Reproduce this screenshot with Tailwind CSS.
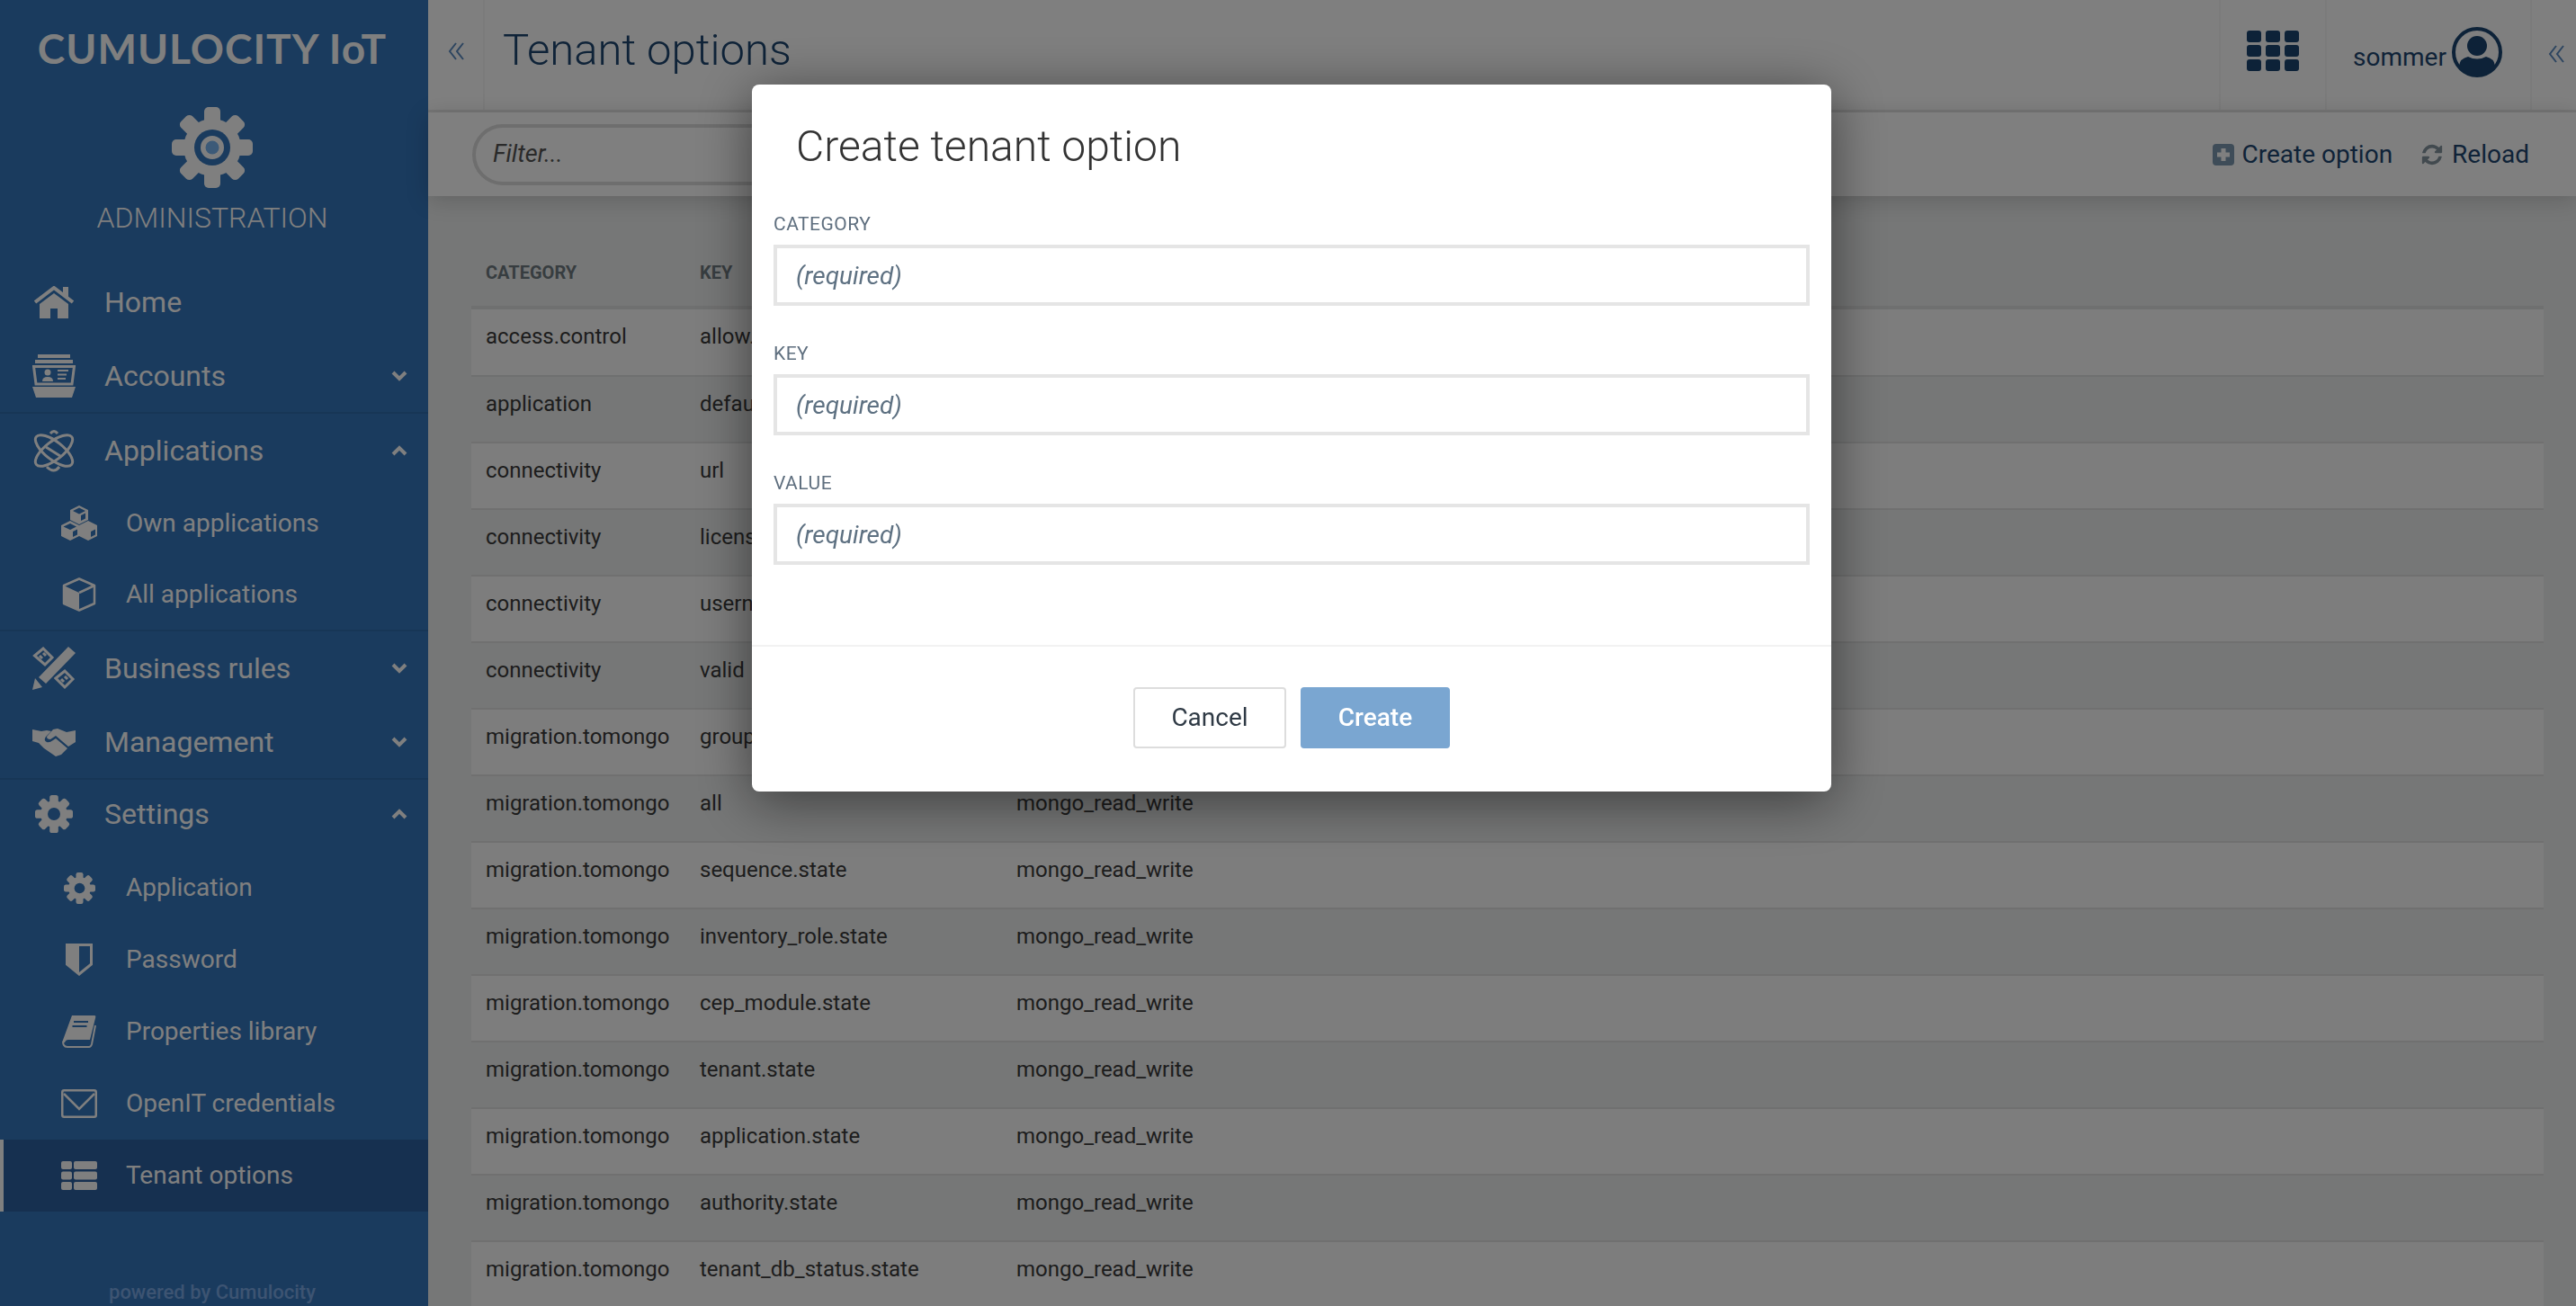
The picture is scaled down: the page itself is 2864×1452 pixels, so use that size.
<!DOCTYPE html>
<html lang="en">
<head>
  <meta charset="UTF-8">
  <title>Tenant options - Administration</title>
  <script src="https://cdn.jsdelivr.net/npm/@tailwindcss/browser@4"></script>
</head>
<body class="font-['Roboto',sans-serif] bg-[#eceeee]">
  <!-- shared gear -->
  <svg class="hidden">
    <symbol id="gear" viewBox="0 0 48 48">
      <g fill="currentColor">
        <rect x="18.5" y="0" width="11" height="48" rx="3"/>
        <rect x="18.5" y="0" width="11" height="48" rx="3" transform="rotate(45 24 24)"/>
        <rect x="18.5" y="0" width="11" height="48" rx="3" transform="rotate(90 24 24)"/>
        <rect x="18.5" y="0" width="11" height="48" rx="3" transform="rotate(135 24 24)"/>
        <circle cx="24" cy="24" r="17"/>
      </g>
      <circle cx="24" cy="24" r="8" fill="#3476bc"/>
    </symbol>
    <symbol id="chev-down" viewBox="0 0 18 12"><path d="M2 2l7 7 7-7" fill="none" stroke="currentColor" stroke-width="4"/></symbol>
    <symbol id="chev-up" viewBox="0 0 18 12"><path d="M2 10l7-7 7 7" fill="none" stroke="currentColor" stroke-width="4"/></symbol>
    <symbol id="dbl" viewBox="0 0 18 20"><path d="M9 1L2 10l7 9M17 1l-7 9 7 9" fill="none" stroke="currentColor" stroke-width="2"/></symbol>
  </svg>

  <div class="flex h-[1452px] w-[2864px] overflow-hidden">
    <!-- sidebar -->
    <aside class="w-[476px] shrink-0 h-full bg-[#3476bc] text-white flex flex-col">
      <div class="h-[295px] shrink-0 flex flex-col items-center pr-[4px]">
        <div class="mt-[26px] h-[56px] leading-[56px] text-[46px] font-bold font-['Lato',sans-serif] tracking-[1px] whitespace-nowrap">CUMULOCITY IoT</div>
        <svg class="mt-[37px] w-[90px] h-[90px]" viewBox="0 0 90 90">
          <g fill="#fff">
            <rect x="36" y="0" width="18" height="90" rx="5"/>
            <rect x="36" y="0" width="18" height="90" rx="5" transform="rotate(45 45 45)"/>
            <rect x="36" y="0" width="18" height="90" rx="5" transform="rotate(90 45 45)"/>
            <rect x="36" y="0" width="18" height="90" rx="5" transform="rotate(135 45 45)"/>
            <circle cx="45" cy="45" r="32"/>
          </g>
          <circle cx="45" cy="45" r="20" fill="#3476bc"/>
          <circle cx="45" cy="45" r="13" fill="#fff"/>
          <circle cx="45" cy="45" r="7.5" fill="#78b4f0"/>
        </svg>
        <div class="mt-[13px] text-[32px] leading-[40px] font-light">ADMINISTRATION</div>
      </div>

      <nav class="flex flex-col text-[32px]">
        <a class="h-[82px] flex items-center pl-[36px] gap-[32px]">
          <span class="w-[48px] flex justify-center">
            <svg class="w-[44px] h-[36px]" viewBox="0 0 44 36" fill="#fff"><path d="M1 18L22 2l21 16" fill="none" stroke="#fff" stroke-width="4"/><rect x="32" y="1" width="6" height="11"/><path d="M6 20L22 8l16 12v16H26V25h-8v11H6z"/></svg>
          </span>
          <span>Home</span>
        </a>
        <a class="h-[83px] flex items-center pl-[36px] gap-[32px] border-b-2 border-[#2e6cad]">
          <span class="w-[48px] flex justify-center">
            <svg class="w-[48px] h-[48px]" viewBox="0 0 48 48" fill="#fff"><rect x="6" y="0" width="36" height="4"/><rect x="3" y="6" width="42" height="4"/><path d="M1.5 13.5h45L44 33H4z" fill="none" stroke="#fff" stroke-width="3"/><circle cx="17" cy="20" r="3.5"/><path d="M11 30q0-5 6-5t6 5z"/><rect x="28" y="17" width="12" height="2"/><rect x="28" y="21.500" width="10" height="2"/><rect x="28" y="26" width="9" height="2"/><path d="M0 36h48l-4 12H4z"/></svg>
          </span>
          <span>Accounts</span>
          <svg class="ml-auto mr-[23px] w-[18px] h-[12px]"><use href="#chev-down"/></svg>
        </a>
        <a class="h-[82px] flex items-center pl-[36px] gap-[32px]">
          <span class="w-[48px] flex justify-center">
            <svg class="w-[48px] h-[48px]" viewBox="0 0 48 48" fill="none" stroke="#fff" stroke-width="3"><ellipse cx="24" cy="24" rx="25" ry="10" transform="rotate(38 24 24)"/><ellipse cx="24" cy="24" rx="25" ry="10" transform="rotate(-38 24 24)"/><path d="M16 42q8 8 14 0M20 5q4-5 8 0"/><path d="M15 20l16 10"/></svg>
          </span>
          <span>Applications</span>
          <svg class="ml-auto mr-[23px] w-[18px] h-[12px]"><use href="#chev-up"/></svg>
        </a>
        <a class="h-[80px] flex items-center pl-[68px] gap-[32px] text-[28px]">
          <span class="w-[40px] flex justify-center">
            <svg class="w-[40px] h-[40px]" viewBox="0 0 40 40"><g fill="#fff"><path d="M20 0l10 5v11l-10 5-10-5V5z"/><path d="M10 17l10 5v12l-10 5L0 34V22z"/><path d="M30 17l10 5v12l-10 5-10-5V22z"/></g><g fill="#3476bc"><path d="M20 2.500l7 3.500-7 3.500L13 6zM22 11l5-2.500v6L22 17zM2.500 23.500L10 27l7-3.500-7-3.500zM13 29l5-2.500v6L13 35zM33 29l5-2.500v6L33 35z"/></g></svg>
          </span>
          <span>Own applications</span>
        </a>
        <a class="h-[80px] flex items-center pl-[68px] gap-[32px] text-[28px] border-b-2 border-[#2e6cad]">
          <span class="w-[40px] flex justify-center">
            <svg class="w-[38px] h-[38px]" viewBox="0 0 38 38"><path d="M19 1.500l17 7.500v20l-17 7.500L2 29V9z" fill="none" stroke="#fff" stroke-width="2.500" stroke-linejoin="round"/><path d="M2 9l17 8v20L2 29z" fill="#fff"/><path d="M19 17l17-8" stroke="#fff" stroke-width="2.500"/></svg>
          </span>
          <span>All applications</span>
        </a>
        <a class="h-[82px] flex items-center pl-[36px] gap-[32px]">
          <span class="w-[48px] flex justify-center">
            <svg class="w-[48px] h-[48px]" viewBox="0 0 48 48"><path d="M0 48l3-13 8 10z" fill="#fff"/><path d="M7 34L40 0l8 7-33 34z" fill="#fff"/><g fill="none" stroke="#fff" stroke-width="3"><path d="M2.500 10L12 2l10 10-8 8zM8 10l3 3M12 7l3 3"/><path d="M26 35l10-8 9 9-9 9zM32 36l3 3M36 33l3 3"/></g></svg>
          </span>
          <span>Business rules</span>
          <svg class="ml-auto mr-[23px] w-[18px] h-[12px]"><use href="#chev-down"/></svg>
        </a>
        <a class="h-[83px] flex items-center pl-[36px] gap-[32px] border-b-2 border-[#2e6cad]">
          <span class="w-[48px] flex justify-center">
            <svg class="w-[48px] h-[32px]" viewBox="0 0 48 32" fill="#fff"><path d="M0 2l10 2 6-1 5 1-6 6q-3 4 1 6 3 1 7-2l3-2 13 11-7 7-6 2-13-9-6-6-7-2z"/><path d="M48 3l-10 2-10-4-5 1-7 8q0 3 4 3l6-4 14 12 8-5z"/></svg>
          </span>
          <span>Management</span>
          <svg class="ml-auto mr-[23px] w-[18px] h-[12px]"><use href="#chev-down"/></svg>
        </a>
        <a class="h-[80px] flex items-center pl-[36px] gap-[32px] pb-[4px]">
          <span class="w-[48px] flex justify-center"><svg class="w-[42px] h-[42px] text-white"><use href="#gear"/></svg></span>
          <span>Settings</span>
          <svg class="ml-auto mr-[23px] w-[18px] h-[12px]"><use href="#chev-up"/></svg>
        </a>
        <a class="h-[80px] flex items-center pl-[68px] gap-[32px] text-[28px]">
          <span class="w-[40px] flex justify-center"><svg class="w-[35px] h-[35px] text-white"><use href="#gear"/></svg></span>
          <span>Application</span>
        </a>
        <a class="h-[80px] flex items-center pl-[68px] gap-[32px] text-[28px]">
          <span class="w-[40px] flex justify-center">
            <svg class="w-[30px] h-[36px]" viewBox="0 0 30 36"><path d="M1.500 1.500h27V23L15 34 1.500 23z" fill="none" stroke="#fff" stroke-width="3"/><path d="M1.500 1.500H15V34L1.500 23z" fill="#fff"/></svg>
          </span>
          <span>Password</span>
        </a>
        <a class="h-[80px] flex items-center pl-[68px] gap-[32px] text-[28px]">
          <span class="w-[40px] flex justify-center">
            <svg class="w-[38px] h-[36px]" viewBox="0 0 38 36"><path d="M11 0h25q2 0 1 3l-6 24H7q-3 0-4 3H0z" fill="#fff"/><path d="M3 27q-3 3-1 6 1 2 4 2h24q2 0 3-3l4-21" fill="none" stroke="#fff" stroke-width="2"/><path d="M13 7h16M11.500 12h16" stroke="#3476bc" stroke-width="2"/></svg>
          </span>
          <span>Properties library</span>
        </a>
        <a class="h-[80px] flex items-center pl-[68px] gap-[32px] text-[28px]">
          <span class="w-[40px] flex justify-center">
            <svg class="w-[40px] h-[32px]" viewBox="0 0 40 32" fill="none" stroke="#fff" stroke-width="2.500"><rect x="1.250" y="1.250" width="37.500" height="29.500" rx="2"/><path d="M3 5l17 17L37 5"/></svg>
          </span>
          <span>OpenIT credentials</span>
        </a>
        <a class="h-[80px] flex items-center pl-[64px] gap-[32px] text-[28px] bg-[#2c60a0] border-l-4 border-white">
          <span class="w-[40px] flex justify-center">
            <svg class="w-[40px] h-[32px]" viewBox="0 0 40 32" fill="#fff"><rect y="0" width="12" height="9" rx="2"/><rect x="14" y="0" width="26" height="9" rx="2"/><rect y="11.500" width="12" height="9" rx="2"/><rect x="14" y="11.500" width="26" height="9" rx="2"/><rect y="23" width="12" height="9" rx="2"/><rect x="14" y="23" width="26" height="9" rx="2"/></svg>
          </span>
          <span>Tenant options</span>
        </a>
      </nav>
      <div class="mt-auto h-[30px] pr-[4px] text-center text-[22px] leading-[30px] font-medium text-[#7aa8e4]">powered by Cumulocity</div>
    </aside>

    <!-- main -->
    <main class="flex-1 flex flex-col min-w-0">
      <header class="h-[125px] shrink-0 flex bg-white border-b-[3px] border-[#ebebeb]">
        <div class="w-[63px] border-r-2 border-[#f6f6f6] flex items-center justify-center pb-[8px] text-[#5a8ac0]">
          <svg class="w-[18px] h-[20px]"><use href="#dbl"/></svg>
        </div>
        <h1 class="pl-[20px] text-[49px] leading-[112px] font-light text-[#1e4670] whitespace-nowrap">Tenant options</h1>
        <div class="ml-auto w-[118px] border-l-2 border-[#f6f6f6] flex justify-center pt-[34px]">
          <svg class="w-[58px] h-[45px]" viewBox="0 0 58 45" fill="#1a4570"><rect width="16" height="13" rx="3"/><rect x="21" width="16" height="13" rx="3"/><rect x="42" width="16" height="13" rx="3"/><rect y="16" width="16" height="13" rx="3"/><rect x="21" y="16" width="16" height="13" rx="3"/><rect x="42" y="16" width="16" height="13" rx="3"/><rect y="32" width="16" height="13" rx="3"/><rect x="21" y="32" width="16" height="13" rx="3"/><rect x="42" y="32" width="16" height="13" rx="3"/></svg>
        </div>
        <div class="w-[228px] border-l-2 border-[#f6f6f6] flex pl-[29px] pt-[30px] gap-[6px]">
          <span class="text-[28px] leading-[68px] text-[#1e4670]">sommer</span>
          <svg class="w-[56px] h-[56px]" viewBox="0 0 56 56"><circle cx="28" cy="28" r="26" fill="none" stroke="#1a4570" stroke-width="4"/><circle cx="28" cy="21" r="11" fill="#1a4570"/><path d="M8 43q1-8 10-10 10 5 20 0 9 2 10 10-8 11-20 11T8 43z" fill="#1a4570"/></svg>
        </div>
        <div class="w-[51px] border-l-2 border-[#f6f6f6] flex justify-center pl-[4px] pt-[50px] text-[#5a8ac0]">
          <svg class="w-[18px] h-[20px]"><use href="#dbl"/></svg>
        </div>
      </header>

      <div class="h-[93px] shrink-0 flex items-center bg-white pl-[49px] pr-[52px] shadow-[0_4px_24px_rgba(0,0,0,0.18)] z-10">
        <div class="w-[560px] h-[68px] rounded-full border-4 border-[#dcdcdc] pl-[19px] flex items-center">
          <input class="w-[200px] outline-none bg-transparent text-[27px] italic placeholder:text-[#555] placeholder:italic" placeholder="Filter...">
        </div>
        <div class="ml-auto flex items-center text-[28px] text-[#1e4670]">
          <svg class="w-[24px] h-[24px] mr-[9px]" viewBox="0 0 24 24"><rect width="24" height="24" rx="4" fill="#7c98b0"/><path d="M12 5v14M5 12h14" stroke="#fff" stroke-width="5"/></svg>
          <span>Create option</span>
          <svg class="w-[26px] h-[26px] ml-[31px] mr-[9px]" viewBox="0 0 1792 1792" fill="#84949f"><path d="M1639 1056q0 5-1 7-64 268-268 434.5t-478 166.5q-146 0-282.5-55t-243.5-157l-129 129q-19 19-45 19t-45-19-19-45v-448q0-26 19-45t45-19h448q26 0 45 19t19 45-19 45l-137 137q71 66 161 102t187 36q134 0 250-65t186-179q11-17 53-117 8-23 30-23h192q13 0 22.5 9.500t9.500 22.500zm25-800v448q0 26-19 45t-45 19h-448q-26 0-45-19t-19-45 19-45l138-138q-148-137-349-137-134 0-250 65t-186 179q-11 17-53 117-8 23-30 23h-199q-13 0-22.5-9.500t-9.500-22.500v-7q65-268 270-434.5t480-166.5q146 0 284 55.500t245 156.500l130-129q19-19 45-19t45 19 19 45z"/></svg>
          <span>Reload</span>
        </div>
      </div>

      <div class="flex-1 min-h-0 pl-[48px] pr-[36px] pt-[122px]">
        <table class="w-full table-fixed text-[24px] text-[#3a3a3a] text-left">
          <thead>
            <tr class="h-[2px]">
              <th class="w-[238px] h-0 p-0 relative"><span class="absolute left-4 bottom-[22px] text-[20px] font-bold text-[#6f7a80]">CATEGORY</span></th>
              <th class="w-[352px] h-0 p-0 relative"><span class="absolute left-4 bottom-[22px] text-[20px] font-bold text-[#6f7a80]">KEY</span></th>
              <th class="h-0 p-0"></th>
            </tr>
          </thead>
          <tbody>
            <tr class="h-[76px] bg-[#fafafa] border-t-4 border-b-2 border-[#dfe0e0]"><td class="pl-4 pt-[12px] align-top">access.control</td><td class="pl-4 pt-[12px] align-top">allow.</td><td></td></tr>
            <tr class="h-[74px] border-b-2 border-[#e0e1e1]"><td class="pl-4 pt-3 align-top">application</td><td class="pl-4 pt-3 align-top">default.application</td><td></td></tr>
            <tr class="h-[74px] bg-[#fafafa] border-b-2 border-[#e0e1e1]"><td class="pl-4 pt-3 align-top">connectivity</td><td class="pl-4 pt-3 align-top">url</td><td></td></tr>
            <tr class="h-[74px] border-b-2 border-[#e0e1e1]"><td class="pl-4 pt-3 align-top">connectivity</td><td class="pl-4 pt-3 align-top">license</td><td></td></tr>
            <tr class="h-[74px] bg-[#fafafa] border-b-2 border-[#e0e1e1]"><td class="pl-4 pt-3 align-top">connectivity</td><td class="pl-4 pt-3 align-top">username</td><td></td></tr>
            <tr class="h-[74px] border-b-2 border-[#e0e1e1]"><td class="pl-4 pt-3 align-top">connectivity</td><td class="pl-4 pt-3 align-top">valid</td><td></td></tr>
            <tr class="h-[74px] bg-[#fafafa] border-b-2 border-[#e0e1e1]"><td class="pl-4 pt-3 align-top">migration.tomongo</td><td class="pl-4 pt-3 align-top">group</td><td></td></tr>
            <tr class="h-[74px] border-b-2 border-[#e0e1e1]"><td class="pl-4 pt-3 align-top">migration.tomongo</td><td class="pl-4 pt-3 align-top">all</td><td class="pl-4 pt-3 align-top">mongo_read_write</td></tr>
            <tr class="h-[74px] bg-[#fafafa] border-b-2 border-[#e0e1e1]"><td class="pl-4 pt-3 align-top">migration.tomongo</td><td class="pl-4 pt-3 align-top">sequence.state</td><td class="pl-4 pt-3 align-top">mongo_read_write</td></tr>
            <tr class="h-[74px] border-b-2 border-[#e0e1e1]"><td class="pl-4 pt-3 align-top">migration.tomongo</td><td class="pl-4 pt-3 align-top">inventory_role.state</td><td class="pl-4 pt-3 align-top">mongo_read_write</td></tr>
            <tr class="h-[74px] bg-[#fafafa] border-b-2 border-[#e0e1e1]"><td class="pl-4 pt-3 align-top">migration.tomongo</td><td class="pl-4 pt-3 align-top">cep_module.state</td><td class="pl-4 pt-3 align-top">mongo_read_write</td></tr>
            <tr class="h-[74px] border-b-2 border-[#e0e1e1]"><td class="pl-4 pt-3 align-top">migration.tomongo</td><td class="pl-4 pt-3 align-top">tenant.state</td><td class="pl-4 pt-3 align-top">mongo_read_write</td></tr>
            <tr class="h-[74px] bg-[#fafafa] border-b-2 border-[#e0e1e1]"><td class="pl-4 pt-3 align-top">migration.tomongo</td><td class="pl-4 pt-3 align-top">application.state</td><td class="pl-4 pt-3 align-top">mongo_read_write</td></tr>
            <tr class="h-[74px] border-b-2 border-[#e0e1e1]"><td class="pl-4 pt-3 align-top">migration.tomongo</td><td class="pl-4 pt-3 align-top">authority.state</td><td class="pl-4 pt-3 align-top">mongo_read_write</td></tr>
            <tr class="h-[74px] bg-[#fafafa] border-b-2 border-[#e0e1e1]"><td class="pl-4 pt-3 align-top">migration.tomongo</td><td class="pl-4 pt-3 align-top">tenant_db_status.state</td><td class="pl-4 pt-3 align-top">mongo_read_write</td></tr>
          </tbody>
        </table>
      </div>
    </main>
  </div>

  <!-- modal -->
  <div class="fixed inset-0 z-50 bg-black/50 flex justify-center items-start pl-[8px] pt-[94px]">
    <div class="w-[1200px] h-[786px] bg-white rounded-[8px] shadow-[0_10px_60px_rgba(0,0,0,0.5)] flex flex-col">
      <h3 class="h-[142px] shrink-0 pl-[49px] pt-[46px] text-[48px] leading-[46px] font-light text-[#333]">Create tenant option</h3>
      <form class="px-[24px] flex-1 flex flex-col gap-[40px]">
        <div>
          <label class="block h-[24px] mb-[12px] text-[21px] tracking-[0.5px] leading-[26px] text-[#5f6f7f]">CATEGORY</label>
          <input class="block w-full h-[68px] border-4 border-[#e5e5e5] pl-[21px] text-[28px] outline-none placeholder:italic placeholder:text-[#5e7182]" placeholder="(required)">
        </div>
        <div>
          <label class="block h-[24px] mb-[12px] text-[21px] tracking-[0.5px] leading-[26px] text-[#5f6f7f]">KEY</label>
          <input class="block w-full h-[68px] border-4 border-[#e5e5e5] pl-[21px] text-[28px] outline-none placeholder:italic placeholder:text-[#5e7182]" placeholder="(required)">
        </div>
        <div>
          <label class="block h-[24px] mb-[12px] text-[21px] tracking-[0.5px] leading-[26px] text-[#5f6f7f]">VALUE</label>
          <input class="block w-full h-[68px] border-4 border-[#e5e5e5] pl-[21px] text-[28px] outline-none placeholder:italic placeholder:text-[#5e7182]" placeholder="(required)">
        </div>
      </form>
      <div class="h-[163px] shrink-0 border-t-2 border-[#f2f2f2] flex justify-center gap-[16px] pt-[45px]">
        <button class="w-[170px] h-[68px] border-2 border-[#dddddd] rounded-[4px] bg-white text-[28px] text-[#2f3a45]">Cancel</button>
        <button class="w-[166px] h-[68px] rounded-[4px] bg-[#7aa6d1] text-[28px] font-medium text-white">Create</button>
      </div>
    </div>
  </div>
</body>
</html>
